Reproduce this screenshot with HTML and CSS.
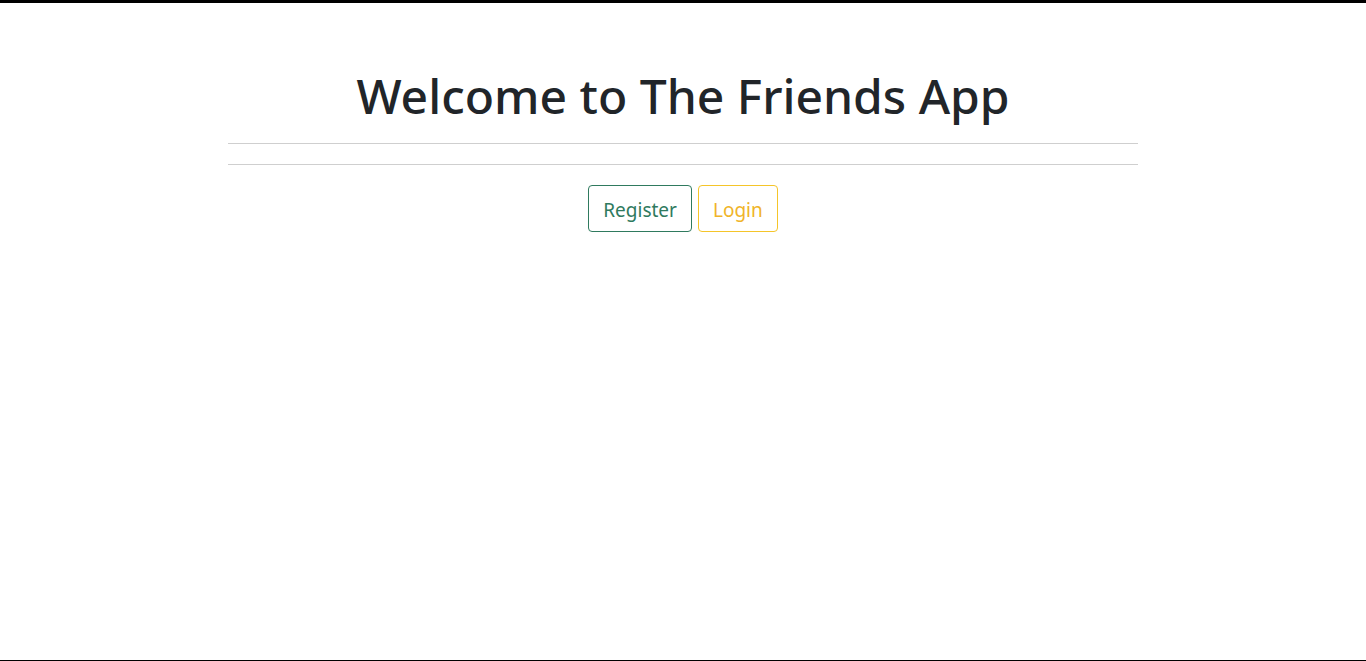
FILE: index.html
```html
<!DOCTYPE html>
<html>
<head>
<meta charset="utf-8">
<link rel="stylesheet" href="styles.css">
</head>
<body>
<div class="page">
  <main class="container">
    <h1 class="title">Welcome to The Friends App</h1>
    <hr class="rule">
    <hr class="rule">
    <div class="actions">
      <a class="btn btn-green" href="#">Register</a>
      <a class="btn btn-yellow" href="#">Login</a>
    </div>
  </main>
</div>
</body>
</html>
```
FILE: styles.css
```css
html, body {
  margin: 0;
  padding: 0;
  height: 100%;
}
body {
  font-family: "Noto Sans", "Open Sans", sans-serif;
  color: #212529;
  background: #fff;
}
.page {
  box-sizing: border-box;
  height: 661px;
  border-top: 3px solid #000;
  border-bottom: 1px solid #000;
}
.container {
  width: 910px;
  margin: 0 auto;
  padding-top: 60px;
  display: flex;
  flex-direction: column;
}
.title {
  margin: 0;
  text-align: center;
  font-size: 48px;
  font-weight: 500;
  line-height: 66px;
}
.rule {
  margin: 0;
  border: 0;
  border-top: 1px solid #cfcfcf;
  height: 0;
}
.rule:first-of-type {
  margin-top: 14px;
}
.rule + .rule {
  margin-top: 20px;
}
.actions {
  margin-top: 20px;
  display: flex;
  justify-content: center;
  gap: 6px;
}
.btn {
  display: inline-block;
  box-sizing: border-box;
  height: 47px;
  padding: 3px 14px 0;
  font-size: 19px;
  line-height: 42px;
  border-radius: 4px;
  text-decoration: none;
  border: 1px solid;
}
.btn-green {
  color: #2f7a5e;
  border-color: #2f7a5e;
}
.btn-yellow {
  color: #f0b429;
  border-color: #f5c52a;
}
```
